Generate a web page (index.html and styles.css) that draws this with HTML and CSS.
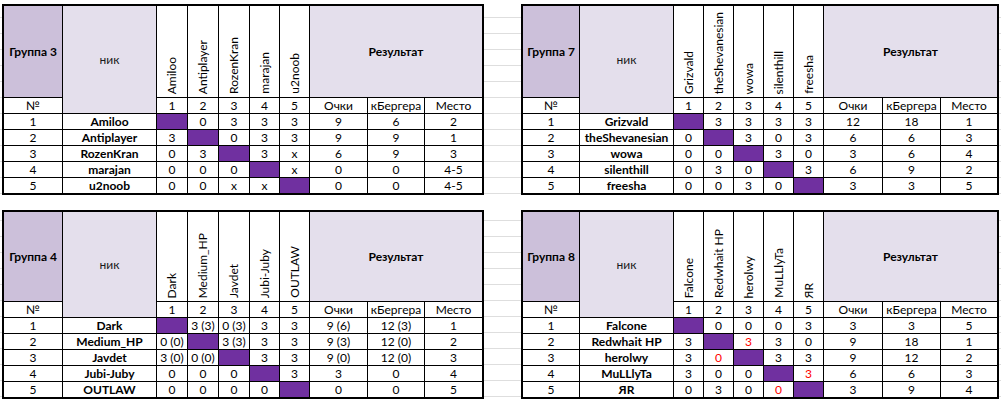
FILE: index.html
```html
<!DOCTYPE html>
<html lang="ru">
<head>
<meta charset="utf-8">
<title>Группы</title>
<link rel="stylesheet" href="styles.css">
</head>
<body>
<div class="sheet">

  <div class="grp grp-l grp-top">
    <div class="c g">Группа 3</div>
    <div class="c nick">ник</div>
    <div class="c rot"><span>Amiloo</span></div>
    <div class="c rot"><span>Antiplayer</span></div>
    <div class="c rot"><span>RozenKran</span></div>
    <div class="c rot"><span>marajan</span></div>
    <div class="c rot"><span>u2noob</span></div>
    <div class="c res">Результат</div>
    <div class="c">№</div><div class="c">1</div><div class="c">2</div><div class="c">3</div><div class="c">4</div><div class="c">5</div><div class="c">Очки</div><div class="c">кБергера</div><div class="c">Место</div>
    <div class="c">1</div><div class="c b">Amiloo</div><div class="c p"></div><div class="c">0</div><div class="c">3</div><div class="c">3</div><div class="c">3</div><div class="c">9</div><div class="c">6</div><div class="c">2</div>
    <div class="c">2</div><div class="c b">Antiplayer</div><div class="c">3</div><div class="c p"></div><div class="c">0</div><div class="c">3</div><div class="c">3</div><div class="c">9</div><div class="c">9</div><div class="c">1</div>
    <div class="c">3</div><div class="c b">RozenKran</div><div class="c">0</div><div class="c">3</div><div class="c p"></div><div class="c">3</div><div class="c">x</div><div class="c">6</div><div class="c">9</div><div class="c">3</div>
    <div class="c">4</div><div class="c b">marajan</div><div class="c">0</div><div class="c">0</div><div class="c">0</div><div class="c p"></div><div class="c">x</div><div class="c">0</div><div class="c">0</div><div class="c">4-5</div>
    <div class="c">5</div><div class="c b">u2noob</div><div class="c">0</div><div class="c">0</div><div class="c">x</div><div class="c">x</div><div class="c p"></div><div class="c">0</div><div class="c">0</div><div class="c">4-5</div>
  </div>

  <div class="grp grp-r grp-top">
    <div class="c g">Группа 7</div>
    <div class="c nick">ник</div>
    <div class="c rot"><span>Grizvald</span></div>
    <div class="c rot"><span>theShevanesian</span></div>
    <div class="c rot"><span>wowa</span></div>
    <div class="c rot"><span>silenthill</span></div>
    <div class="c rot"><span>freesha</span></div>
    <div class="c res">Результат</div>
    <div class="c">№</div><div class="c">1</div><div class="c">2</div><div class="c">3</div><div class="c">4</div><div class="c">5</div><div class="c">Очки</div><div class="c">кБергера</div><div class="c">Место</div>
    <div class="c">1</div><div class="c b">Grizvald</div><div class="c p"></div><div class="c">3</div><div class="c">3</div><div class="c">3</div><div class="c">3</div><div class="c">12</div><div class="c">18</div><div class="c">1</div>
    <div class="c">2</div><div class="c b">theShevanesian</div><div class="c">0</div><div class="c p"></div><div class="c">3</div><div class="c">0</div><div class="c">3</div><div class="c">6</div><div class="c">6</div><div class="c">3</div>
    <div class="c">3</div><div class="c b">wowa</div><div class="c">0</div><div class="c">0</div><div class="c p"></div><div class="c">3</div><div class="c">0</div><div class="c">3</div><div class="c">6</div><div class="c">4</div>
    <div class="c">4</div><div class="c b">silenthill</div><div class="c">0</div><div class="c">3</div><div class="c">0</div><div class="c p"></div><div class="c">3</div><div class="c">6</div><div class="c">9</div><div class="c">2</div>
    <div class="c">5</div><div class="c b">freesha</div><div class="c">0</div><div class="c">0</div><div class="c">3</div><div class="c">0</div><div class="c p"></div><div class="c">3</div><div class="c">3</div><div class="c">5</div>
  </div>

  <div class="grp grp-l grp-bot">
    <div class="c g">Группа 4</div>
    <div class="c nick">ник</div>
    <div class="c rot"><span>Dark</span></div>
    <div class="c rot"><span>Medium_HP</span></div>
    <div class="c rot"><span>Javdet</span></div>
    <div class="c rot"><span>Jubi-Juby</span></div>
    <div class="c rot"><span>OUTLAW</span></div>
    <div class="c res">Результат</div>
    <div class="c">№</div><div class="c">1</div><div class="c">2</div><div class="c">3</div><div class="c">4</div><div class="c">5</div><div class="c">Очки</div><div class="c">кБергера</div><div class="c">Место</div>
    <div class="c">1</div><div class="c b">Dark</div><div class="c p"></div><div class="c">3 (3)</div><div class="c">0 (3)</div><div class="c">3</div><div class="c">3</div><div class="c">9 (6)</div><div class="c">12 (3)</div><div class="c">1</div>
    <div class="c">2</div><div class="c b">Medium_HP</div><div class="c">0 (0)</div><div class="c p"></div><div class="c">3 (3)</div><div class="c">3</div><div class="c">3</div><div class="c">9 (3)</div><div class="c">12 (0)</div><div class="c">2</div>
    <div class="c">3</div><div class="c b">Javdet</div><div class="c">3 (0)</div><div class="c">0 (0)</div><div class="c p"></div><div class="c">3</div><div class="c">3</div><div class="c">9 (0)</div><div class="c">12 (0)</div><div class="c">3</div>
    <div class="c">4</div><div class="c b">Jubi-Juby</div><div class="c">0</div><div class="c">0</div><div class="c">0</div><div class="c p"></div><div class="c">3</div><div class="c">3</div><div class="c">0</div><div class="c">4</div>
    <div class="c">5</div><div class="c b">OUTLAW</div><div class="c">0</div><div class="c">0</div><div class="c">0</div><div class="c">0</div><div class="c p"></div><div class="c">0</div><div class="c">0</div><div class="c">5</div>
  </div>

  <div class="grp grp-r grp-bot">
    <div class="c g">Группа 8</div>
    <div class="c nick">ник</div>
    <div class="c rot"><span>Falcone</span></div>
    <div class="c rot"><span>Redwhait HP</span></div>
    <div class="c rot"><span>herolwy</span></div>
    <div class="c rot"><span>MuLLlyTa</span></div>
    <div class="c rot"><span>ЯR</span></div>
    <div class="c res">Результат</div>
    <div class="c">№</div><div class="c">1</div><div class="c">2</div><div class="c">3</div><div class="c">4</div><div class="c">5</div><div class="c">Очки</div><div class="c">кБергера</div><div class="c">Место</div>
    <div class="c">1</div><div class="c b">Falcone</div><div class="c p"></div><div class="c">0</div><div class="c">0</div><div class="c">0</div><div class="c">3</div><div class="c">3</div><div class="c">3</div><div class="c">5</div>
    <div class="c">2</div><div class="c b">Redwhait HP</div><div class="c">3</div><div class="c p"></div><div class="c red">3</div><div class="c">3</div><div class="c">0</div><div class="c">9</div><div class="c">18</div><div class="c">1</div>
    <div class="c">3</div><div class="c b">herolwy</div><div class="c">3</div><div class="c red">0</div><div class="c p"></div><div class="c">3</div><div class="c">3</div><div class="c">9</div><div class="c">12</div><div class="c">2</div>
    <div class="c">4</div><div class="c b">MuLLlyTa</div><div class="c">3</div><div class="c">0</div><div class="c">0</div><div class="c p"></div><div class="c red">3</div><div class="c">6</div><div class="c">6</div><div class="c">3</div>
    <div class="c">5</div><div class="c b">ЯR</div><div class="c">0</div><div class="c">3</div><div class="c">0</div><div class="c red">0</div><div class="c p"></div><div class="c">3</div><div class="c">9</div><div class="c">4</div>
  </div>

</div>
</body>
</html>
```

FILE: styles.css
```css
html, body {
  margin: 0;
  padding: 0;
}

body {
  width: 1001px;
  height: 402px;
  overflow: hidden;
  background-color: #fff;
  background-image:
    repeating-linear-gradient(to bottom, #dedede 0 1px, transparent 1px 16px),
    repeating-linear-gradient(to bottom, #dedede 0 1px, transparent 1px 16px);
  background-size: 100% 180px, 100% 190px;
  background-position: 0 17px, 0 220px;
  background-repeat: no-repeat;
  font-family: Lato, "Open Sans", "Liberation Sans", sans-serif;
  font-size: 12px;
  color: #000;
}

.sheet {
  display: grid;
  grid-template-columns: auto auto;
  column-gap: 37px;
  row-gap: 15px;
  padding: 4px 0 0 2px;
  align-items: start;
  justify-content: start;
}

.grp {
  display: grid;
  gap: 1px;
  background: #000;
  border: 2px solid #000;
}

.grp-l {
  grid-template-columns: 58px 93px 30px 30px 30px 29px 29px 57px 56px 57px;
}

.grp-r {
  grid-template-columns: 56px 93px 29px 29px 29px 29px 29px 58px 57px 56px;
}

.grp-top {
  grid-template-rows: 91px repeat(6, 15px);
}

.grp-bot {
  grid-template-rows: 89px repeat(6, 15px);
}

.c {
  background: #fff;
  display: flex;
  align-items: center;
  justify-content: center;
  line-height: 15px;
  white-space: nowrap;
  overflow: hidden;
}

.g {
  background: #ccc0da;
  font-weight: 700;
}

.nick {
  background: #e4dfec;
  grid-row: span 2;
  color: #1a1a1a;
}

.res {
  background: #e4dfec;
  grid-column: span 3;
  font-weight: 700;
}

.rot {
  align-items: flex-end;
  padding-bottom: 3px;
}

.rot span {
  writing-mode: vertical-rl;
  transform: rotate(180deg);
  line-height: 1;
}

.b {
  font-weight: 700;
}

.p {
  background: #7030a0;
}

.red {
  color: #ff0000;
}
```
